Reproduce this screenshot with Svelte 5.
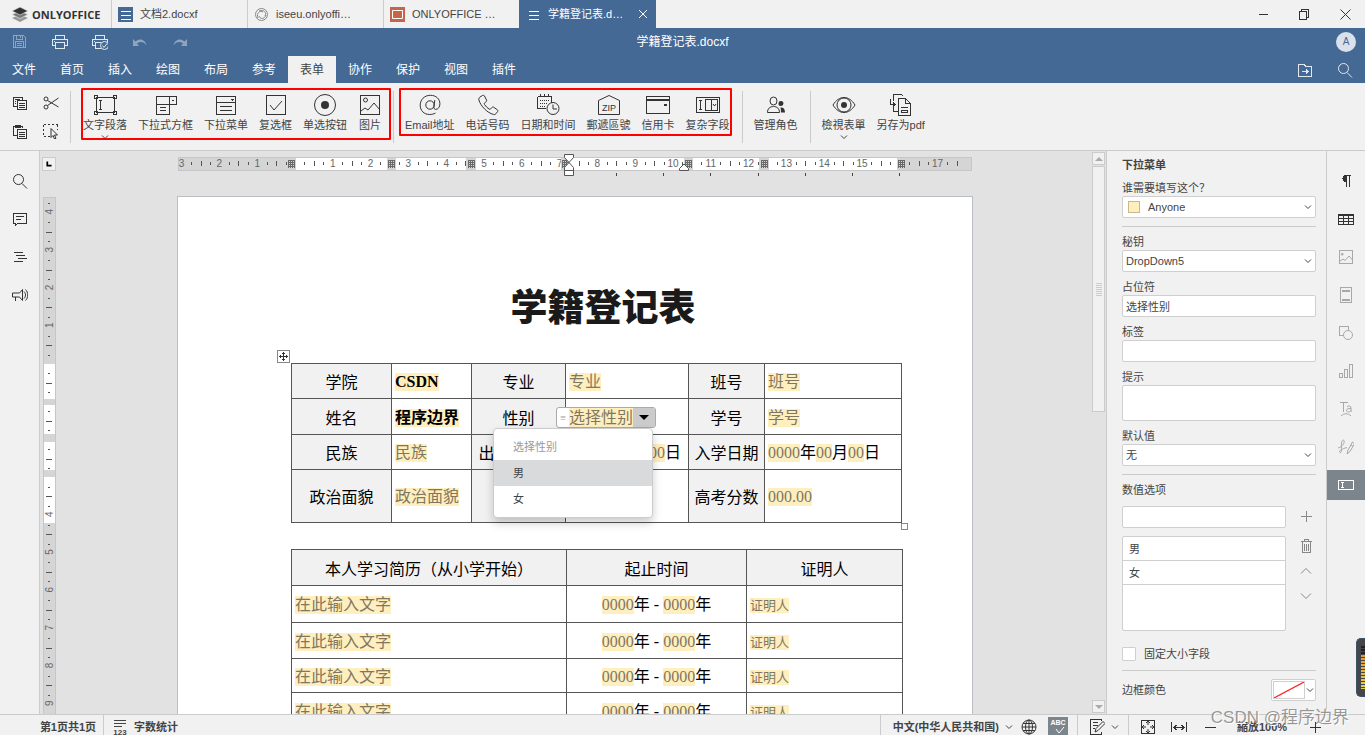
<script lang="ts">
  const icons: Record<string, string> = {
    textField:
      '<path d="M3.5 4.5h18v15h-18zM1.5 2.5h3v3h-3zM20.5 2.5h3v3h-3zM1.5 18.5h3v3h-3zM20.5 18.5h3v3h-3zM6 7.5h3M7.5 7.5v9M6 16.5h3" fill="#f1f1f1"/>',
    combo:
      '<path d="M2.5 3.5h20v8h-20zM2.5 11.5v10h13v-18M6 14.5h6M6 17.5h6"/><path d="M17 6.5h4l-2 2z" fill="currentColor" stroke="none"/>',
    dropdown:
      '<path d="M2.5 3.5h19v18h-19zM2.5 9.5h19M6 13.5h12M6 17.5h12"/><path d="M16 6h4l-2 2z" fill="currentColor" stroke="none"/>',
    check: '<path d="M2.5 2.5h19v19h-19z"/><path class="soft" d="M6 12l4 5 8-9"/>',
    radio:
      '<circle class="soft" cx="12" cy="12" r="10.5"/><circle class="soft" cx="12" cy="12" r="4" fill="currentColor" stroke="none"/>',
    picture:
      '<path d="M2.5 2.5h19v19h-19z"/><g class="soft"><circle cx="7.5" cy="7" r="2"/><path d="M3 18l4-3 3 2 6-7 6 7"/></g>',
    email:
      '<g class="soft"><circle cx="12" cy="12" r="4.2"/><path d="M16.8 7l-.9 6.5c-.2 2 .6 2.9 1.8 2.9 2.600 0 4.200-2.600 4.200-5.600C21.900 5.800 18 2.300 12.400 2.300 6.500 2.300 2.200 6.600 2.200 12.200c0 5.500 3.900 9.300 9.400 9.300 2.200 0 4.300-.5 5.900-1.500"/></g>',
    phone:
      '<path class="soft" d="M4 4l2.500-1.500c.8-.4 1.600-.2 2 .5l2 4c.4.8.1 1.400-.5 1.800L8.500 10c-.4.400-.4.900 0 1.500 1.300 2 2.700 3.300 4.500 4.500.6.400 1.100.4 1.500 0l1.400-1.500c.5-.5 1.200-.7 1.900-.2l3.400 2.400c.8.6.9 1.200.4 1.900L20 20.700c-.6.700-1.600 1-2.600.700C11.500 20 4.500 13 2.900 7c-.3-1.200.1-2.300 1.100-3z"/>',
    date:
      '<path d="M1.500 3.500h14v6M1.500 3.500v12h8M4.500 1v3M8.500 1v3M12.500 1v3"/><path d="M4 7.500h10M4 10.500h7M4 13.500h5" stroke-dasharray="1 1"/><g class="soft"><circle cx="17" cy="15.500" r="6"/><path d="M17 11.500v4.500h4"/></g>',
    zip:
      '<path class="soft" d="M1.500 21.500v-14l10.500-5 10.500 5v14z"/><text x="12" y="18" font-size="9" text-anchor="middle" fill="currentColor" stroke="none">ZIP</text>',
    card:
      '<path d="M.5 3.500h23v17H.5z"/><path d="M1 6h22v2H1zM18 11h3v2h-3z" fill="currentColor" stroke="none"/>',
    complex:
      '<path d="M.5 4.500h23v15H.5zM3 7.500h3M4.500 7.500v9M3 16.500h3M9.500 6.500h12v11h-12zM15.500 6.500v11"/><path class="soft" d="M17 11l1.500 2 1.500-2"/>',
    roles:
      '<g class="soft"><ellipse cx="9.500" cy="8" rx="3.500" ry="4"/><path d="M3.500 19.500c0-4 2.500-6 6-6s6 2 6 6z"/><path d="M17 8a2.500 2.500 0 1 1-.1 5 2.500 2.500 0 0 1 .1-5zM16.500 14.500c3-.3 4.500 1.500 4.500 5h-4c0-2-.2-3.500-.5-5z" fill="currentColor" stroke="none"/></g>',
    view:
      '<g class="soft"><path d="M1 12c3-5 7-7.500 11-7.500S20 7 23 12c-3 5-7 7.500-11 7.500S4 17 1 12z"/><circle cx="12" cy="12" r="7"/><circle cx="12" cy="12" r="3" fill="currentColor" stroke="none"/></g>',
    savePdf:
      '<path d="M4.500 12v6.500h4M4.500 8v-6.500h8l2 2M1.500 5.500v6h4M4 9.500l2 2-2 2"/><path d="M9.500 5.500h7l5 5v12h-12zM16.500 5.500v5h5M12 14.500h7M12.500 17.500h6v2h-6z"/>',
    save:
      '<path d="M1.500 1.500h10l2 2v10h-12zM4.500 1.500v4h6v-4M3.500 13.500v-6h8v6M5 9.500h5M5 11.500h5M8.500 2v2"/>',
    print: '<path d="M3.500 5.500v-4h9v4M3.500 11.500h-3v-6h15v6h-3M3.500 8.500h9v6h-9zM2 7.500h1"/>',
    printCheck:
      '<path d="M3.500 5.500v-4h9v4M3.500 11.500h-3v-6h15v2M3.500 14.500v-6h5M3.500 14.500h5M2 7.500h1"/><g class="soft"><circle cx="12.500" cy="11.500" r="4"/><path d="M10.500 11.500l1.500 2 3-4"/></g>',
    undo: '<path class="soft" d="M1 5v7h6L5 9.500c3-2.500 7-2 9.500 2-1-6-7-8-11-4z" fill="currentColor" stroke="none"/>',
    redo: '<path class="soft" d="M15 5v7H9l2-2.500c-3-2.500-7-2-9.500 2 1-6 7-8 11-4z" fill="currentColor" stroke="none"/>',
    copy: '<path d="M4.500 11.500h-3v-9h9v2M3 4.500h5M3 6.500h1M3 8.500h1M5.500 5.500h9v9h-9zM7 8.500h6M7 10.500h6M7 12.500h6"/>',
    paste: '<path d="M4.500 12.500h-3v-9h9v1M5.500 6.500h9v9h-9zM7 9.500h6M7 11.500h6M7 13.500h6"/><path d="M3 2h6v3H3z" fill="currentColor" stroke="none"/>',
    cut: '<g class="soft"><circle cx="3" cy="4" r="2"/><circle cx="3" cy="12" r="2"/><path d="M4.500 5.500L15.500 12M4.500 10.500L15.500 3"/></g>',
    select: '<path d="M.5 1.500h14M.5 13.500h6M.5 1.500v12M14.500 1.500v5" stroke-dasharray="2 2"/><path class="soft" d="M8 5.500v9l2-2 1.500 3.500 1.500-.7-1.500-3.300h3z" fill="#f1f1f1"/>',
    search: '<g class="soft"><circle cx="6.500" cy="6.500" r="5"/><path d="M10 10.500l5 5"/></g>',
    comment: '<path d="M1.500 2.500h13v10h-9l-2 2v-2h-2zM4 5.500h8M4 8.500h5"/>',
    outline: '<path d="M2 3.500h9M4 6.500h9M6 9.500h9M2 12.500h9"/>',
    speaker: '<path class="soft" d="M.5 6h7l3-3.500v11L7.500 10h-7zM3.500 10v4M12 4.500c2 2 2 5 0 7M13.500 2.500c3 3 3 8 0 11"/>',
    folder: '<path d="M1.500 14.500v-12h6l1 2h6v10zM5 9.500h6M9 7.500l2 2-2 2"/>',
    paragraph: '<path d="M8.500 2v12M11.500 2v12M8 2.500h5"/><path d="M8.500 2v7H8a3.500 3.500 0 0 1 0-7z" fill="currentColor" stroke="none"/>',
    table: '<path d="M.5 3.500h15v10H.5zM.5 7.500h15M.5 10.500h15M5.500 4v9M10.500 4v9"/><path d="M0 3h16v2H0z" fill="currentColor" stroke="none"/>',
    image: '<path d="M1.500 1.500h13v13h-13z"/><path class="soft" d="M2 12l3-2 2 1.500 4-4.500 3.500 4M3.500 4.500h1.500v1.500H3.500z"/>',
    header: '<path d="M2.500.5h11v15h-11z"/><path d="M4 3h8v1.500H4zM4 12h8v1.500H4z" fill="currentColor" stroke="none"/>',
    shape: '<path d="M4.500 10.500h-3v-9h9v3"/><circle class="soft" cx="10" cy="10" r="4.500"/>',
    chart: '<path d="M1.500 10.500h3v4h-3zM6.500 6.500h3v8h-3zM11.500 1.500h3v13h-3z"/>',
    textArt: '<path class="soft" d="M3 15c3-3 7-3 10 0"/><path d="M2 1.500h8M5.500 2v9"/><path class="soft" d="M9 5.500c2.500-1 4-.5 4 1.500v4M13 7.500c-3 0-4.500.5-4.500 2 0 2 3.500 2 4.500 0"/>',
    sign: '<path class="soft" d="M0 9c4-1 7-5 6-7.500-2-2-3 3-2.500 8 .2 4-1 5-2 3.500C1 11 7 9 9 8.500M9 15l1-4 4.500-8 2 1.500L12 12.500zM13 6l2 1.500"/>',
    form: '<path d="M.5 3.500h15v9H.5zM2.500 5.500h3M4 5.500v5M2.500 10.500h3"/>',
    plus: '<path d="M8.500 3v11M3 8.500h11"/>',
    minus: '<path d="M3 8.500h11"/>',
    trash: '<path d="M3 3.500h11M6.500 3.500v-2h4v2M4.500 4v10.500h8V4M6.500 6v7M8.500 6v7M10.500 6v7"/>',
    up: '<path class="soft" d="M3 10.500l5-5 5 5"/>',
    down: '<path class="soft" d="M3 5.500l5 5 5-5"/>',
    count: '<path d="M2 1.500h12M2 4.500h12M2 7.500h8"/><text x="8" y="16" font-size="8" text-anchor="middle" fill="currentColor" stroke="none">123</text>',
    globe: '<g class="soft"><circle cx="8" cy="8" r="7"/><ellipse cx="8" cy="8" rx="3.500" ry="7"/><path d="M1 8h14M2 4.500h12M2 11.500h12M8 1v14"/></g>',
    track: '<path d="M12.500 2v-1.500h-11v15h11v-3M4 3.500h5M4 6.500h5M4 9.500h2"/><path class="soft" d="M6 13l1-3.500L14 2.500l2 2L9 11.500z"/>',
    fitPage: '<path d="M1.500 1.500h13v13h-13z"/><path d="M8 2v4M8 10v4M2 8h4M10 8h4M6 4l2-2 2 2M6 12l2 2 2-2M4 6L2 8l2 2M12 6l2 2-2 2" class="soft"/>',
    fitWidth: '<path d="M.5 3v10M15.500 3v10M3 8.500h10M5.500 6L3 8.500 5.500 11M10.500 6L13 8.500 10.500 11"/>',
    menu: '<path d="M3 4.500h10M3 8.500h10M3 12.500h10"/>',
    close: '<path class="soft" d="M4 4l8 8M12 4l-8 8"/>',
    winMin: '<path d="M4 8.500h9"/>',
    winMax: '<path d="M3.500 5.500h7v8h-7zM5.500 5v-1.500h7v8h-1.500"/>',
    winClose: '<path class="soft" d="M3.500 3.500l10 10M13.500 3.500l-10 10"/>',
    move: '<path d="M6.500 2v9M2 6.500h9M5 3.500h3M5 9.500h3M3.500 5v3M9.500 5v3"/>',
  };

  const quick = [
    ["save", "保存"],
    ["print", "打印"],
    ["printCheck", "快速打印"],
    ["undo", "撤消"],
    ["redo", "重做"],
  ];
  const menus = ["文件", "首页", "插入", "绘图", "布局", "参考", "表单", "协作", "保护", "视图", "插件"];
  const basicFields = [
    ["textField", "文字段落"],
    ["combo", "下拉式方框"],
    ["dropdown", "下拉菜单"],
    ["check", "复选框"],
    ["radio", "单选按钮"],
    ["picture", "图片"],
  ];
  const extraFields = [
    ["email", "Email地址"],
    ["phone", "电话号码"],
    ["date", "日期和时间"],
    ["zip", "郵遞區號"],
    ["card", "信用卡"],
    ["complex", "复杂字段"],
  ];
  const leftTools = [
    ["search", "查找"],
    ["comment", "批注"],
    ["outline", "标题"],
    ["speaker", "反馈和支持"],
  ];
  const rightTools = ["paragraph", "table", "image", "header", "shape", "chart", "textArt", "sign", "form"];

  // ruler geometry: one centimetre at 96 dpi
  const CM = 37.8;
  const hZero = 117;
  const hTicks = Array.from({ length: 83 }, (_, i) => i - 12).filter((q) => q <= 70);
  const vZero = 167;
  const vTicks = Array.from({ length: 56 }, (_, i) => i - 17);
  const hWhite = [[118, 91], [218, 70], [297, 86], [388, 118], [515, 66], [590, 129]];
  const vWhite = [[167, 35], [208, 29], [245, 28], [280, 46]];
  const handles = [109, 209, 289, 383, 506, 582, 719];
  const tabStops = [438, 485, 532, 580, 627, 674, 721];

  let activeMenu = $state("表单");
  let options = $state(["男", "女"]);
  let highlighted = $state("男");
  let newOption = $state("");

  function addOption() {
    if (!newOption) return;
    options.push(newOption);
    newOption = "";
  }
</script>

{#snippet icon(name: string, size = 16)}
  <svg class="icon" width={size} height={size} viewBox="0 0 {size} {size}" aria-hidden="true">
    {@html icons[name]}
  </svg>
{/snippet}

{#snippet chevron()}
  <svg class="chevron" width="8" height="8" viewBox="0 0 8 8" aria-hidden="true">
    <path d="M1 2.500l3 3 3-3" />
  </svg>
{/snippet}

{#snippet bigButton(name: string, label: string, more: boolean)}
  <button class="big">
    {@render icon(name, 24)}
    <span>{label}</span>
    {#if more}{@render chevron()}{/if}
  </button>
{/snippet}

<div class="app">
  <div class="tabs">
    <div class="brand">
      <svg width="16" height="15" viewBox="0 0 16 15" aria-hidden="true">
        <path d="M8 7.500l8 3.500-8 4-8-4z" fill="#999" />
        <path d="M8 4l8 3.500-8 4-8-4z" fill="#777" stroke="#f1f1f1" stroke-width=".6" />
        <path d="M8 0l8 4-8 4-8-4z" fill="#333" stroke="#f1f1f1" stroke-width=".6" />
      </svg>
      ONLYOFFICE
    </div>
    <button class="tab">
      <span class="doc-icon blue">{@render icon("menu")}</span>
      <span class="name">文档2.docxf</span>
    </button>
    <button class="tab">
      <svg class="doc-icon" width="15" height="15" viewBox="0 0 15 15" fill="none" stroke="#888" aria-hidden="true">
        <circle cx="7.500" cy="7.500" r="6" /><path d="M4 11c-2-5 2-8 5-6M5 4c5-2 8 2 6 5M12 8c-2 5-6 4-7 1" />
      </svg>
      <span class="name">iseeu.onlyoffi…</span>
    </button>
    <button class="tab">
      <svg class="doc-icon" width="15" height="15" viewBox="0 0 15 15" aria-hidden="true">
        <path d="M0 0h15v15H0z" fill="#c5664c" /><path d="M2.500 3.500h10v8h-10z" fill="none" stroke="#fff" />
      </svg>
      <span class="name">ONLYOFFICE …</span>
    </button>
    <button class="tab active">
      <span class="doc-icon">{@render icon("menu")}</span>
      <span class="name">学籍登记表.d…</span>
      {@render icon("close")}
    </button>
    <div class="window-buttons">
      <button aria-label="最小化">{@render icon("winMin")}</button>
      <button aria-label="还原">{@render icon("winMax")}</button>
      <button aria-label="关闭">{@render icon("winClose")}</button>
    </div>
  </div>

  <header>
    <div class="title-row">
      <div class="quick">
        {#each quick as [name, label]}
          <button class={name} aria-label={label}>{@render icon(name)}</button>
        {/each}
      </div>
      <div class="doc-title">学籍登记表.docxf</div>
      <div class="user"><span class="avatar">A</span></div>
    </div>
    <nav>
      {#each menus as m}
        <button class:active={m === activeMenu} onclick={() => (activeMenu = m)}>{m}</button>
      {/each}
      <div class="nav-right">
        <button aria-label="打开文件位置">{@render icon("folder")}</button>
        <button aria-label="查找">{@render icon("search")}</button>
      </div>
    </nav>
  </header>

  <div class="toolbar">
    <div class="clip">
      <button aria-label="复制">{@render icon("copy")}</button>
      <button aria-label="剪切">{@render icon("cut")}</button>
      <button aria-label="粘贴">{@render icon("paste")}</button>
      <button aria-label="选择">{@render icon("select")}</button>
    </div>
    <div class="sep"></div>
    <div class="group marked basic">
      {#each basicFields as [name, label], i}
        {@render bigButton(name, label, i === 0)}
      {/each}
    </div>
    <div class="sep tight"></div>
    <div class="group marked extra">
      {#each extraFields as [name, label]}
        {@render bigButton(name, label, false)}
      {/each}
    </div>
    <div class="sep"></div>
    <div class="group">{@render bigButton("roles", "管理角色", false)}</div>
    <div class="sep"></div>
    <div class="group">
      {@render bigButton("view", "檢視表單", true)}
      {@render bigButton("savePdf", "另存为pdf", false)}
    </div>
  </div>

  <main>
    <aside class="left-bar">
      {#each leftTools as [name, label]}
        <button aria-label={label}>{@render icon(name)}</button>
      {/each}
    </aside>

    <section class="editor">
      <div class="corner">
        <svg width="14" height="14" viewBox="0 0 14 14" aria-hidden="true"><path d="M5 4v5h5" stroke="#000" stroke-width="2" fill="none" /></svg>
      </div>
      <div class="h-ruler">
        <svg width="796" height="24" viewBox="0 0 796 24">
          <g shape-rendering="crispEdges">
            <rect x=".5" y="3.500" width="793" height="13" fill="#d5d5d5" stroke="#c6c6c6" />
            {#each hWhite as [x, w]}
              <rect {x} y="4" width={w} height="12" fill="#fff" />
            {/each}
            {#each hTicks as q}
              {#if q % 4 !== 0}
                <rect x={Math.round(hZero + (q * CM) / 4)} y={q % 2 ? 8 : 7} width="1" height={q % 2 ? 3 : 5} fill="#555" />
              {/if}
            {/each}
          </g>
          {#each hTicks as q}
            {#if q % 4 === 0 && q !== 0 && q !== 64}
              <text x={hZero + (q * CM) / 4} y="13">{Math.abs(q / 4)}</text>
            {/if}
          {/each}
          <g shape-rendering="crispEdges">
            {#each handles as x}
              <rect {x} y="4" width="9" height="12" fill="#d5d5d5" />
              <path d="M{x + 1.5} 6v8M{x + 3.5} 6v8M{x + 5.5} 6v8M{x + 7.5} 6v8M{x + 1} 6.500h7M{x + 1} 8.500h7M{x + 1} 10.500h7M{x + 1} 12.500h7" stroke="#6a6a6a" />
            {/each}
            {#each tabStops as x}
              <rect {x} y="19" width="1" height="3" fill="#444" />
            {/each}
          </g>
          <g fill="#fff" stroke="#555">
            <path d="M386.500.5h9v3l-4.500 5-4.500-5zM386.500 16.500v-3l4.500-5 4.500 5v3zM386.500 16.500h9v5h-9z" />
            <path d="M501.500 16.500v-2l4.500-4.500 4.500 4.500v2z" />
          </g>
        </svg>
      </div>
      <div class="v-ruler">
        <svg width="14" height="520" viewBox="0 0 14 520">
          <g shape-rendering="crispEdges">
            <rect x=".5" y=".5" width="12" height="540" fill="#d5d5d5" stroke="#c6c6c6" />
            {#each vWhite as [y, h]}
              <rect x="1" {y} width="11" height={h} fill="#fff" />
            {/each}
            {#each vTicks as q}
              {#if q % 4 !== 0}
                <rect x={q % 2 ? 5 : 3} y={Math.round(vZero + (q * CM) / 4)} width={q % 2 ? 2 : 6} height="1" fill="#555" />
              {/if}
            {/each}
          </g>
          {#each vTicks as q}
            {#if q % 4 === 0 && (q < 0 || q > 12)}
              <text transform="translate(10 {vZero + (q * CM) / 4 - 1}) rotate(-90)">{Math.abs(q / 4)}</text>
            {/if}
          {/each}
        </svg>
      </div>

      <div class="canvas">
        <article class="page">
          <h1>学籍登记表</h1>
          <div class="table-wrap">
            <span class="move">{@render icon("move", 13)}</span>
            <span class="resize"></span>
            <table class="info">
              <colgroup><col class="c1" /><col class="c2" /><col class="c3" /><col class="c4" /><col class="c5" /><col class="c6" /></colgroup>
              <tbody>
                <tr>
                  <th>学院</th><td><mark class="filled">CSDN</mark></td>
                  <th>专业</th><td><mark>专业</mark></td>
                  <th>班号</th><td><mark>班号</mark></td>
                </tr>
                <tr class="tall">
                  <th>姓名</th><td><mark class="filled">程序边界</mark></td>
                  <th>性别</th>
                  <td class="has-combo">
                    <div class="combo">
                      <span class="grip">≡</span><mark>选择性别</mark>
                      <button aria-label="展开选项"><svg width="10" height="5" viewBox="0 0 10 5" aria-hidden="true"><path d="M0 0h10L5 5z" /></svg></button>
                      <div class="popup">
                        <button class="hint">选择性别</button>
                        {#each options as o}
                          <button class:highlighted={o === highlighted} onmouseenter={() => (highlighted = o)}>{o}</button>
                        {/each}
                      </div>
                    </div>
                  </td>
                  <th>学号</th><td><mark>学号</mark></td>
                </tr>
                <tr>
                  <th>民族</th><td><mark>民族</mark></td>
                  <th>出生年月日</th><td><mark>0000</mark>年<mark>00</mark>月<mark>00</mark>日</td>
                  <th>入学日期</th><td><mark>0000</mark>年<mark>00</mark>月<mark>00</mark>日</td>
                </tr>
                <tr class="last">
                  <th>政治面貌</th><td><mark>政治面貌</mark></td>
                  <th></th><td></td>
                  <th>高考分数</th><td><mark>000.00</mark></td>
                </tr>
              </tbody>
            </table>
          </div>
          <table class="history">
            <colgroup><col class="d1" /><col class="d2" /><col class="d3" /></colgroup>
            <tbody>
              <tr><th>本人学习简历（从小学开始）</th><th>起止时间</th><th>证明人</th></tr>
              {#each [1, 2, 3, 4] as row (row)}
                <tr>
                  <td><mark>在此输入文字</mark></td>
                  <td class="center"><mark>0000</mark>年 - <mark>0000</mark>年</td>
                  <td><mark class="small">证明人</mark></td>
                </tr>
              {/each}
            </tbody>
          </table>
        </article>
      </div>

      <div class="scrollbar">
        <button aria-label="向上滚动"><svg width="8" height="4" viewBox="0 0 8 4"><path d="M0 4h8L4 0z" /></svg></button>
        <div class="thumb"></div>
        <button class="to-end" aria-label="向下滚动"><svg width="8" height="4" viewBox="0 0 8 4"><path d="M0 0h8L4 4z" /></svg></button>
      </div>
    </section>

    <aside class="panel">
      <h2>下拉菜单</h2>
      <label for="role">谁需要填写这个？</label>
      <div class="select with-swatch">
        <span class="swatch"></span>
        <select id="role"><option>Anyone</option></select>
        {@render chevron()}
      </div>
      <hr />
      <label for="key">秘钥</label>
      <div class="select">
        <select id="key"><option>DropDown5</option></select>
        {@render chevron()}
      </div>
      <label for="placeholder">占位符</label>
      <input id="placeholder" type="text" value="选择性别" />
      <label for="tag">标签</label>
      <input id="tag" type="text" />
      <label for="tip">提示</label>
      <textarea id="tip"></textarea>
      <label for="default">默认值</label>
      <div class="select">
        <select id="default"><option>无</option></select>
        {@render chevron()}
      </div>
      <hr />
      <label for="option">数值选项</label>
      <div class="options">
        <input id="option" type="text" bind:value={newOption} />
        <button aria-label="添加" onclick={addOption}>{@render icon("plus")}</button>
        <ul>
          {#each options as o}
            <li>{o}</li>
          {/each}
        </ul>
        <div class="option-tools">
          <button aria-label="删除">{@render icon("trash")}</button>
          <button aria-label="上移">{@render icon("up")}</button>
          <button aria-label="下移">{@render icon("down")}</button>
        </div>
      </div>
      <div class="fixed-size">
        <input id="fixed" type="checkbox" />
        <label for="fixed">固定大小字段</label>
      </div>
      <hr />
      <div class="color-row">
        <span>边框颜色</span>
        <button aria-label="边框颜色">
          <svg width="32" height="18" viewBox="0 0 30 16" aria-hidden="true"><path d="M0 16L30 0" stroke="#f22" stroke-width="1.200" /></svg>
          {@render chevron()}
        </button>
      </div>
    </aside>

    <aside class="right-bar">
      {#each rightTools as name}
        <button class={name} aria-label={name}>{@render icon(name)}</button>
      {/each}
      <div class="meter"><i></i></div>
    </aside>
  </main>

  <footer>
    <button class="pages">第1页共1页</button>
    <button class="count">{@render icon("count")}字数统计</button>
    <div class="seg lang">
      <button>中文(中华人民共和国){@render chevron()}</button>
      <button class="cell" aria-label="文档语言">{@render icon("globe")}</button>
      <button class="spell" aria-label="拼写检查">
        <svg width="20" height="18" viewBox="0 0 20 18" aria-hidden="true"><text x="10" y="8" font-size="7" text-anchor="middle" fill="#fff">ABC</text><path d="M8 12l3 4 5-6" stroke="#fff" fill="none" /></svg>
      </button>
    </div>
    <div class="seg track"><button aria-label="跟踪修订">{@render icon("track")}{@render chevron()}</button></div>
    <div class="seg zoom">
      <button class="cell" aria-label="适合页面">{@render icon("fitPage")}</button>
      <button class="cell" aria-label="适合宽度">{@render icon("fitWidth")}</button>
      <button class="cell" aria-label="缩小">{@render icon("minus")}</button>
      <button class="percent">縮放100%</button>
      <button class="cell" aria-label="放大">{@render icon("plus")}</button>
    </div>
  </footer>
  <div class="watermark">CSDN @程序边界</div>
</div>

<style>
  :global(body) {
    overflow: hidden;
  }
  .app {
    --line: #cbcbcb;
    --panel: #f1f1f1;
    --blue: #446995;
    position: relative;
    display: flex;
    flex-direction: column;
    height: 100vh;
    overflow: hidden;
    background: var(--panel);
    color: #444;
    font: 11px/16px "Liberation Sans", "Noto Sans CJK SC", sans-serif;
  }
  .app * {
    box-sizing: border-box;
  }
  button {
    display: flex;
    align-items: center;
    justify-content: center;
    padding: 0;
    border: 0;
    background: none;
    color: inherit;
    font: inherit;
    white-space: nowrap;
  }
  .icon,
  .chevron {
    display: block;
    flex-shrink: 0;
    fill: none;
    stroke: currentColor;
    shape-rendering: crispEdges;
  }
  .icon :global(.soft),
  .chevron {
    shape-rendering: auto;
  }

  .tabs {
    display: flex;
    height: 28px;
    flex-shrink: 0;
  }
  .brand {
    display: flex;
    align-items: center;
    gap: 4px;
    width: 111px;
    padding-left: 12px;
    color: #333;
    font: 700 11px "Open Sans", sans-serif;
  }
  .tab {
    justify-content: flex-start;
    gap: 7px;
    width: 136px;
    padding-left: 6px;
    border-left: 1px solid var(--line);
  }
  .tab .name {
    width: 80px;
    text-align: left;
  }
  .tab.active {
    width: 137px;
    background: var(--blue);
    border-color: var(--blue);
    color: #fff;
  }
  .doc-icon {
    display: flex;
    width: 15px;
    height: 15px;
    flex-shrink: 0;
  }
  .blue {
    background: var(--blue);
    color: #fff;
  }
  .window-buttons {
    display: flex;
    margin-left: auto;
  }
  .window-buttons button {
    width: 41px;
    color: #333;
  }

  header {
    flex-shrink: 0;
    background: var(--blue);
    color: #fff;
    font-size: 12px;
  }
  .title-row {
    display: grid;
    grid-template-columns: 1fr auto 1fr;
    align-items: center;
    height: 28px;
  }
  .quick {
    display: flex;
  }
  .quick button {
    width: 40px;
    height: 28px;
    opacity: 0.85;
  }
  .quick .save,
  .quick .undo,
  .quick .redo {
    opacity: 0.4;
  }
  .user {
    display: flex;
    justify-content: flex-end;
    padding-right: 9px;
  }
  .avatar {
    width: 20px;
    height: 20px;
    border-radius: 50%;
    background: #dae1ea;
    color: var(--blue);
    font-size: 10px;
    line-height: 20px;
    text-align: center;
  }
  nav {
    display: flex;
    height: 27px;
  }
  nav button {
    width: 48px;
  }
  nav button.active {
    background: var(--panel);
    color: #444;
  }
  .nav-right {
    display: flex;
    margin-left: auto;
  }
  .nav-right button {
    width: 40px;
    opacity: 0.85;
  }

  .toolbar {
    display: flex;
    height: 68px;
    flex-shrink: 0;
    padding-top: 5px;
    border-bottom: 1px solid var(--line);
  }
  .clip {
    display: grid;
    grid-template-columns: 31px 31px;
    grid-template-rows: 28px 28px;
    width: 70px;
    padding: 1px 4px;
    color: #333;
  }
  .sep {
    width: 1px;
    height: 52px;
    margin: 3px 9px 0 10px;
    background: var(--line);
  }
  .clip + .sep {
    margin-left: 0;
    margin-right: 10px;
  }
  .sep.tight {
    margin-left: 2px;
    margin-right: 5px;
  }
  .group {
    display: flex;
    align-items: flex-start;
    gap: 11px;
    height: 52px;
    padding-top: 3px;
    border: 2px solid transparent;
  }
  .marked {
    border-color: #f00;
    border-radius: 1px;
  }
  .basic {
    padding-right: 7px;
  }
  .extra {
    height: 48px;
    padding-left: 4px;
  }
  .big {
    flex-direction: column;
  }
  .big .icon {
    color: #333;
  }

  main {
    display: flex;
    flex: 1;
    min-height: 0;
  }
  .left-bar,
  .right-bar {
    display: flex;
    flex-direction: column;
    flex-shrink: 0;
    gap: 8px;
    padding-top: 15px;
  }
  .left-bar {
    width: 40px;
    border-right: 1px solid var(--line);
    color: #333;
  }
  .right-bar {
    position: relative;
    width: 39px;
    border-left: 1px solid var(--line);
    color: #a8a8a8;
  }
  .left-bar button,
  .right-bar button {
    height: 30px;
  }
  .right-bar .paragraph,
  .right-bar .table {
    color: #333;
  }
  .right-bar .form {
    background: #7d858c;
    color: #fff;
  }
  .meter {
    position: absolute;
    right: 0;
    top: 487px;
    width: 9px;
    height: 59px;
    padding: 7px 0 7px 4px;
    border: 1px solid #3c5468;
    border-right: 0;
    border-radius: 5px 0 0 5px;
    background: #45454a;
  }
  .meter i {
    display: block;
    height: 100%;
    background:
      repeating-linear-gradient(transparent 0 2px, #45454a 2px 3px),
      linear-gradient(#222 0 20%, #e09a3c 20%, #e0d250);
  }

  .editor {
    display: grid;
    grid-template-columns: 18px 1fr 14px;
    grid-template-rows: 45px 1fr;
    flex: 1;
    min-width: 0;
    overflow: hidden;
    background: #e2e2e2;
  }
  .corner svg {
    display: block;
    margin: 6px 0 0 2px;
    border: 1px solid var(--line);
    background: var(--panel);
  }
  .h-ruler {
    display: flex;
    justify-content: center;
    min-width: 0;
    padding: 3px 0 0 2px;
  }
  .h-ruler svg,
  .v-ruler svg {
    display: block;
    flex-shrink: 0;
  }
  .h-ruler text,
  .v-ruler text {
    font-size: 10px;
    fill: #666;
    text-anchor: middle;
  }
  .v-ruler {
    grid-area: 2 / 1;
    padding: 1px 0 0 3px;
    min-height: 0;
  }
  .canvas {
    grid-area: 2 / 2;
    display: flex;
    justify-content: center;
    min-height: 0;
    overflow: hidden;
  }
  .page {
    width: 796px;
    height: 1123px;
    flex-shrink: 0;
    padding: 84px 57px 0 113px;
    border: 1px solid #bbbec2;
    background: #fff;
    color: #000;
    font-family: "Liberation Serif", "Noto Sans CJK SC", serif;
    font-size: 16px;
    line-height: 18px;
  }
  h1 {
    margin: 0 0 26px;
    color: #1a1a1a;
    font-size: 37px;
    font-weight: 900;
    line-height: 56px;
    text-align: center;
  }
  .table-wrap {
    position: relative;
    width: 611px;
    margin-bottom: 26px;
  }
  .move {
    position: absolute;
    left: -14px;
    top: -13px;
    background: #fff;
    color: #333;
    box-shadow: inset 0 0 0 1px #888;
  }
  .resize {
    position: absolute;
    right: -6px;
    bottom: -7px;
    width: 7px;
    height: 7px;
    border: 1px solid #888;
    background: #fff;
  }
  table {
    table-layout: fixed;
    border-collapse: collapse;
  }
  .info {
    width: 611px;
  }
  .history {
    width: 612px;
  }
  .c1 { width: 100px; }
  .c2 { width: 80px; }
  .c3 { width: 94px; }
  .c4 { width: 123px; }
  .c5 { width: 76px; }
  .c6 { width: 137px; }
  .d1 { width: 275px; }
  .d2 { width: 180px; }
  .d3 { width: 156px; }
  tr {
    height: 35px;
  }
  tr.tall,
  .history tr {
    height: 36px;
  }
  .history tr:nth-child(2) {
    height: 37px;
  }
  .history tr:nth-child(4) {
    height: 34px;
  }
  tr.last {
    height: 53px;
  }
  th,
  td {
    padding: 2px 3px 0;
    border: 1px solid #555;
    white-space: nowrap;
    text-align: left;
  }
  th {
    padding: 4px 0 0;
    background: #f1f1f1;
    font-weight: 400;
    text-align: center;
  }
  td.center {
    text-align: center;
  }
  mark {
    display: inline-block;
    background: #ffefbf;
    color: #7f775f;
    line-height: 18px;
  }
  mark.filled {
    color: #000;
    font-weight: 700;
  }
  mark.small {
    font-size: 13px;
    line-height: 15px;
  }
  .has-combo {
    position: relative;
  }
  .combo {
    position: absolute;
    left: -10px;
    top: 8px;
    display: flex;
    width: 100px;
    height: 21px;
    border: 1px solid #aaa;
    border-radius: 3px;
    background: #fff;
    line-height: 19px;
  }
  .combo mark {
    line-height: 19px;
  }
  .grip {
    width: 12px;
    color: #999;
    font-size: 10px;
    text-align: center;
  }
  .combo > button {
    flex: 1;
    background: #cbcbcb;
  }
  .popup {
    position: absolute;
    z-index: 2;
    left: -64px;
    top: 20px;
    width: 160px;
    padding: 5px 0;
    border: 1px solid #ccc;
    border-radius: 4px;
    background: #fff;
    color: #444;
    box-shadow: 0 5px 10px rgba(0, 0, 0, 0.2);
    font: 11px/26px "Liberation Sans", "Noto Sans CJK SC", sans-serif;
  }
  .popup button {
    justify-content: flex-start;
    width: 100%;
    height: 26px;
    padding-left: 19px;
  }
  .popup .hint {
    color: #999;
  }
  .popup .highlighted {
    background: #d8dadc;
  }

  .scrollbar {
    grid-area: 1 / 3 / 3 / 4;
    display: flex;
    flex-direction: column;
    padding: 1px 1px 0 0;
  }
  .scrollbar button {
    height: 13px;
    border: 1px solid var(--line);
    background: var(--panel);
  }
  .scrollbar svg {
    fill: #aaa;
  }
  .thumb {
    height: 246px;
    margin-top: 1px;
    border: 1px solid var(--line);
    background:
      repeating-linear-gradient(#ccc 0 1px, transparent 1px 2px) center / 6px 13px no-repeat,
      var(--panel);
  }
  .scrollbar .to-end {
    margin-top: auto;
    margin-bottom: 1px;
  }

  .panel {
    width: 220px;
    flex-shrink: 0;
    overflow: hidden;
    padding: 6px 10px 0 15px;
    border-left: 1px solid var(--line);
  }
  h2 {
    margin: 0;
    font-size: 11px;
    line-height: 16px;
  }
  .panel > label {
    display: block;
    margin-top: 7px;
  }
  .panel hr {
    height: 1px;
    margin: 8px 0 0;
    border: 0;
    background: var(--line);
  }
  .panel input[type="text"],
  .panel textarea,
  .select {
    display: flex;
    align-items: center;
    width: 100%;
    height: 22px;
    padding: 0 3px;
    border: 1px solid #cfcfcf;
    border-radius: 2px;
    background: #fff;
    color: #444;
    font: inherit;
  }
  .panel textarea {
    height: 36px;
    resize: none;
  }
  .select select {
    flex: 1;
    height: 20px;
    padding: 0;
    border: 0;
    background: none;
    color: inherit;
    font: inherit;
    appearance: none;
  }
  .with-swatch {
    gap: 8px;
    padding-left: 5px;
  }
  .swatch {
    width: 12px;
    height: 12px;
    border: 1px solid #c9b98a;
    background: #ffefbf;
  }
  .options {
    display: grid;
    grid-template-columns: 164px 1fr;
    gap: 8px 12px;
    margin-top: 8px;
    color: #888;
  }
  .options > button,
  .option-tools button {
    width: 16px;
    height: 20px;
  }
  ul {
    height: 95px;
    margin: 0;
    padding: 0;
    list-style: none;
    border: 1px solid #cfcfcf;
    border-radius: 2px;
    background: #fff;
    color: #444;
  }
  li {
    height: 24px;
    padding-left: 6px;
    border-bottom: 1px solid #cfcfcf;
    line-height: 24px;
  }
  .option-tools {
    display: flex;
    flex-direction: column;
    gap: 5px;
  }
  .fixed-size {
    display: flex;
    align-items: center;
    gap: 8px;
    height: 16px;
    margin-top: 15px;
  }
  .fixed-size input {
    width: 14px;
    height: 14px;
    margin: 0;
    border: 1px solid #cfcfcf;
    border-radius: 1px;
    background: #fff;
    appearance: none;
  }
  .color-row {
    display: flex;
    align-items: center;
    justify-content: space-between;
    margin-top: 8px;
  }
  .color-row button {
    gap: 1px;
    width: 45px;
    height: 22px;
    border: 1px solid #cfcfcf;
    border-radius: 2px;
    background: #fff;
  }
  .color-row button svg:first-child {
    border: 1px solid #cfcfcf;
  }

  footer {
    display: flex;
    height: 21px;
    flex-shrink: 0;
    border-top: 1px solid var(--line);
    overflow: hidden;
    font-weight: 700;
  }
  footer button {
    height: 24px;
  }
  .pages {
    width: 104px;
    padding-left: 33px;
    border-right: 1px solid var(--line);
  }
  .count {
    gap: 6px;
    padding-left: 8px;
  }
  .seg {
    display: flex;
    height: 24px;
    border-left: 1px solid var(--line);
  }
  .seg .icon {
    color: #333;
  }
  .lang {
    margin-left: auto;
    padding: 0 9px 0 12px;
  }
  .seg button {
    gap: 6px;
  }
  .cell {
    width: 31px;
  }
  .spell {
    height: 18px;
    margin: 2px 0 0 4px;
    background: #7d858c;
  }
  .track {
    width: 51px;
    padding-left: 11px;
  }
  .zoom {
    width: 237px;
    padding-left: 3px;
  }
  .percent {
    width: 74px;
  }
  .watermark {
    position: absolute;
    right: 16px;
    bottom: 5px;
    color: rgba(120, 120, 120, 0.75);
    font-size: 17px;
    line-height: 24px;
    text-shadow: 1px 1px 0 #fff;
    pointer-events: none;
  }
</style>
